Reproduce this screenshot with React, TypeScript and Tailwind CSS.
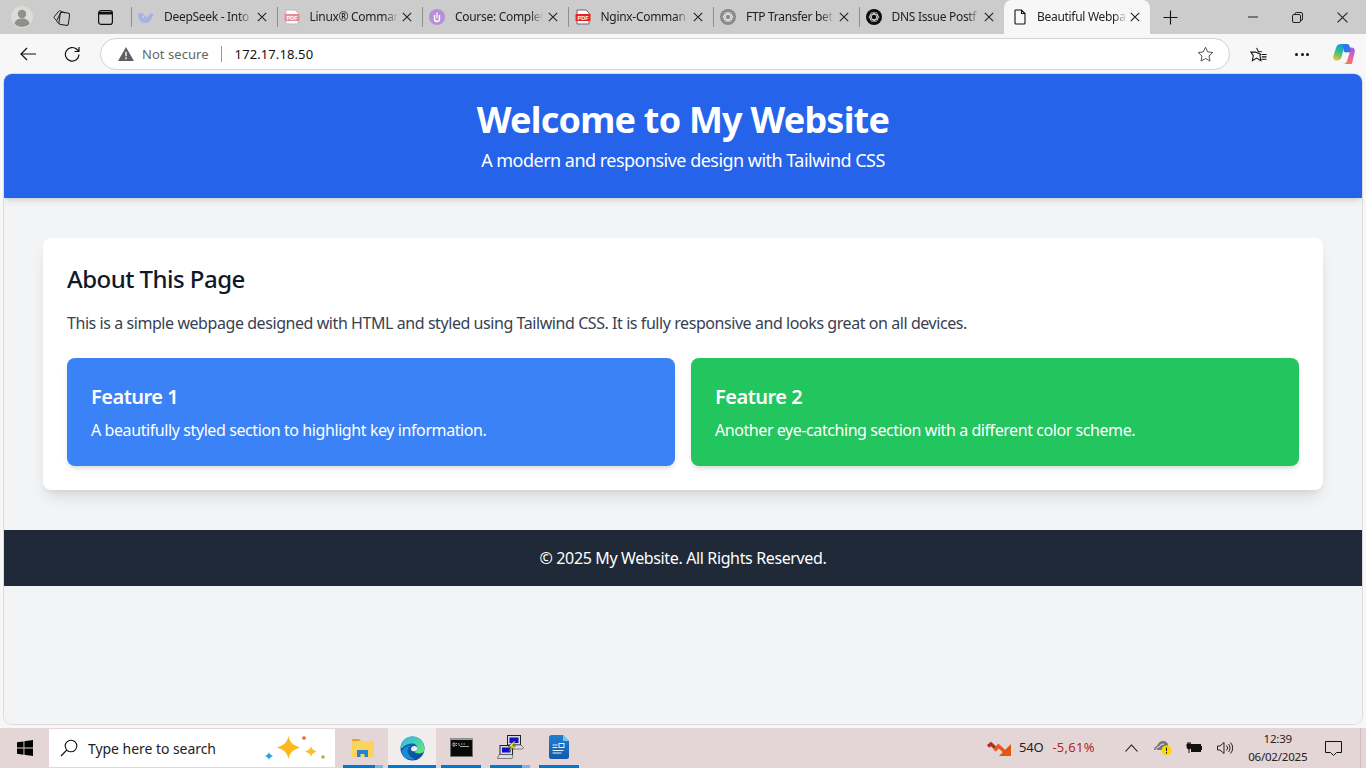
import { ReactNode } from "react";

const ui = "font-['Noto_Sans',sans-serif]";

function Close() {
  return (
    <svg className="w-[10px] h-[10px] shrink-0" viewBox="0 0 10 10" fill="none" stroke="#222" strokeWidth="1.1">
      <path d="M.8.8l8.4 8.4M9.2.8L.8 9.2" />
    </svg>
  );
}

function PdfIcon({ faded }: { faded?: boolean }) {
  const c = faded ? "#e98b8b" : "#f01f25";
  return (
    <svg className="w-[16px] h-[16px] shrink-0" viewBox="0 0 16 16">
      <path d="M2 1h9l3 3v11H2z" fill="#fff" stroke={faded ? "#bbb" : "#666"} strokeWidth="1" />
      <rect x="0.5" y="5" width="15" height="7" fill={c} />
      <text x="8" y="10.800" textAnchor="middle" fontSize="5.500" fontWeight="700" fill="#fff" fontFamily="Liberation Sans">PDF</text>
    </svg>
  );
}

function DeepSeekIcon() {
  return (
    <svg className="w-[16px] h-[16px] shrink-0" viewBox="0 0 16 16" fill="#a4b2e6">
      <path d="M0 3c1 2 2 2 3 1 2 0 4 2 5 5 2-1 2-3 4-4l1-1 1 1c1 0 2 0 2 1-1 1-2 1-2 2-1 4-4 6-7 6-4 0-7-3-7-11z" />
      <circle cx="5" cy="8" r="1" fill="#d0d0d0" />
    </svg>
  );
}

function CourseIcon() {
  return (
    <svg className="w-[16px] h-[16px] shrink-0" viewBox="0 0 16 16">
      <circle cx="8" cy="8" r="8" fill="#b78ed8" />
      <path d="M5.500 6v4a2.500 2.500 0 0 0 5 0V6" fill="none" stroke="#fff" strokeWidth="1.400" />
      <path d="M8 3.500v6" stroke="#fff" strokeWidth="1.200" />
    </svg>
  );
}

function GptIcon({ dark }: { dark?: boolean }) {
  const bg = dark ? "#0d0d0d" : "#8a8a8a";
  return (
    <svg className="w-[16px] h-[16px] shrink-0" viewBox="0 0 16 16">
      <circle cx="8" cy="8" r="8" fill={bg} />
      <g fill="none" stroke="#fff" strokeWidth="0.800" opacity="0.9">
        <ellipse cx="8" cy="8" rx="4.800" ry="2.600" />
        <ellipse cx="8" cy="8" rx="4.800" ry="2.600" transform="rotate(60 8 8)" />
        <ellipse cx="8" cy="8" rx="4.800" ry="2.600" transform="rotate(120 8 8)" />
      </g>
    </svg>
  );
}

function PageIcon() {
  return (
    <svg className="w-[16px] h-[16px] shrink-0" viewBox="0 0 16 16" fill="none" stroke="#111" strokeWidth="1.100">
      <path d="M3.500 1h6l3.500 3.500V14a1 1 0 0 1-1 1H4a1 1 0 0 1-1-1V1.500a.5.500 0 0 1 .5-.5zM9.500 1v3.500H13" />
    </svg>
  );
}

function Tab({ icon, title }: { icon: ReactNode; title: string }) {
  return (
    <div className="relative w-[145.500px] h-[34px] shrink-0 flex items-center pl-[7px] pr-[10px]">
      <span className="absolute left-0 top-[7px] h-[20px] w-px bg-[#8e8e8e]" />
      {icon}
      <span className="ml-[10px] w-[88px] overflow-hidden whitespace-nowrap text-[12px] leading-[16px] text-[#222] tracking-[-0.3px] [mask-image:linear-gradient(to_right,#000_85%,transparent)]">
        {title}
      </span>
      <span className="ml-auto">
        <Close />
      </span>
    </div>
  );
}

function TabBar() {
  return (
    <div className="h-[34px] bg-[#cccccc] flex items-center">
      <div className="w-[44px] h-[34px] flex items-center justify-center">
        <svg className="w-[22px] h-[22px]" viewBox="0 0 22 22">
          <circle cx="11" cy="11" r="11" fill="#dedbd6" />
          <circle cx="11" cy="8" r="4.200" fill="#8f8f8f" />
          <path d="M3.500 18c.5-4 3.500-5.500 7.500-5.500s7 1.500 7.500 5.500a11 11 0 0 1-15 0z" fill="#8f8f8f" />
        </svg>
      </div>
      <div className="ml-[9px] w-[17px] flex justify-center">
        <svg className="w-[17px] h-[17px]" viewBox="0 0 17 17" fill="none" stroke="#1c1c1c" strokeWidth="1">
          <rect x="6.500" y="3.500" width="9.500" height="12.500" rx="2" transform="rotate(8 11 10)" />
          <path d="M6 14.500l-1.700-1.300a1.600 1.600 0 0 1-.4-2l3.700-7.500a1.600 1.600 0 0 1 2-.8l2.400 1" />
          <path d="M3.500 11.500L1.500 9.500a1.600 1.600 0 0 1 0-2.100L5.500 2.500a1.600 1.600 0 0 1 2.100-.4l1.300.8" />
        </svg>
      </div>
      <div className="ml-[27px] w-[16px] flex justify-center">
        <svg className="w-[15px] h-[15px]" viewBox="0 0 15 15" fill="none" stroke="#111" strokeWidth="1.200">
          <rect x=".6" y=".6" width="13.800" height="13.800" rx="2.500" />
          <path d="M1 3.200h13" strokeWidth="2.600" />
        </svg>
      </div>
      <div className="ml-[18px] flex">
        <Tab icon={<DeepSeekIcon />} title="DeepSeek - Into" />
        <Tab icon={<PdfIcon faded />} title="Linux® Comman" />
        <Tab icon={<CourseIcon />} title="Course: Complet" />
        <Tab icon={<PdfIcon />} title="Nginx-Comman" />
        <Tab icon={<GptIcon />} title="FTP Transfer bet" />
        <Tab icon={<GptIcon dark />} title="DNS Issue Postf" />
        <div className="relative w-[146px] h-[34px] shrink-0 flex items-center pl-[8px] pr-[10px] bg-[#f7f7f7] rounded-t-[8px]">
          <PageIcon />
          <span className="ml-[9px] w-[90px] overflow-hidden whitespace-nowrap text-[12px] leading-[16px] text-[#222] tracking-[-0.3px] [mask-image:linear-gradient(to_right,#000_85%,transparent)]">
            Beautiful Webpa
          </span>
          <span className="ml-auto">
            <Close />
          </span>
        </div>
      </div>
      <svg className="ml-[13px] w-[15px] h-[15px]" viewBox="0 0 15 15" stroke="#111" strokeWidth="1.100">
        <path d="M7.500.5v14M.5 7.500h14" />
      </svg>
      <div className="ml-auto flex items-center text-[#111]">
        <div className="w-[45px] flex justify-center">
          <svg className="w-[10px] h-[10px]" viewBox="0 0 10 10" stroke="#222" strokeWidth="1">
            <path d="M0 5h10" />
          </svg>
        </div>
        <div className="w-[45px] flex justify-center">
          <svg className="w-[11px] h-[11px]" viewBox="0 0 11 11" fill="none" stroke="#222" strokeWidth="1">
            <rect x=".5" y="2.500" width="8" height="8" rx="1.500" />
            <path d="M3 2.500v-.5a1.500 1.500 0 0 1 1.500-1.500h4.500a1.500 1.500 0 0 1 1.500 1.500v5a1.500 1.500 0 0 1-1.500 1.500" />
          </svg>
        </div>
        <div className="w-[46px] flex justify-center pr-[2px]">
          <svg className="w-[11px] h-[11px]" viewBox="0 0 10 10" fill="none" stroke="#222" strokeWidth="1">
            <path d="M.5.5l9 9M9.500.5l-9 9" />
          </svg>
        </div>
      </div>
    </div>
  );
}

function Toolbar() {
  return (
    <div className="h-[40px] bg-[#f7f7f7] flex items-center">
      <div className="w-[56px] flex justify-center">
        <svg className="w-[16px] h-[14px]" viewBox="0 0 16 14" fill="none" stroke="#111" strokeWidth="1.200">
          <path d="M16 7H1M7 1L1 7l6 6" />
        </svg>
      </div>
      <div className="w-[32px] flex justify-center">
        <svg className="w-[17px] h-[17px]" viewBox="0 0 17 17" fill="none" stroke="#111" strokeWidth="1.200">
          <path d="M15 8.500A6.800 6.800 0 1 1 12.800 3.300L15 5.500M15 1v4.500h-4.500" />
        </svg>
      </div>
      <div className="ml-[12px] w-[1130px] h-[32px] bg-white border border-[#d2d2d2] rounded-full flex items-center pl-[17px] pr-[15px]">
        <svg className="w-[16px] h-[14px]" viewBox="0 0 17 15">
          <path d="M8.500 0L17 15H0z" fill="#5f5f5f" />
          <path d="M8.500 5v5M8.500 11v2" stroke="#fff" strokeWidth="1.400" />
        </svg>
        <span className="ml-[8px] text-[13px] leading-[18px] text-[#666] tracking-[0.05px]">Not secure</span>
        <span className="ml-[12px] w-px h-[16px] bg-[#9a9a9a]" />
        <span className="ml-[13px] text-[13px] leading-[18px] text-[#111] tracking-[0.1px]">172.17.18.50</span>
        <svg className="ml-auto w-[17px] h-[17px]" viewBox="0 0 17 17" fill="none" stroke="#555" strokeWidth="1">
          <path d="M8.500 1.200l2.200 4.700 5.100.6-3.800 3.500 1 5.100-4.500-2.600-4.500 2.600 1-5.100L1.200 6.500l5.100-.6z" />
        </svg>
      </div>
      <svg className="ml-[20px] w-[17px] h-[17px]" viewBox="0 0 18 17" fill="none" stroke="#111" strokeWidth="1.100">
        <path d="M7 1.500l1.900 4h3.600M11.500 8.500l-1 1 1 5.500-4.500-2.800-4.500 2.800 1-5.300L1 6h4.800z" />
        <path d="M12.500 8.500h5M12.500 11h5M12 13.500h5.500" />
      </svg>
      <div className="ml-[28px] flex gap-[2.500px]">
        <span className="w-[3px] h-[3px] rounded-full bg-[#111]" />
        <span className="w-[3px] h-[3px] rounded-full bg-[#111]" />
        <span className="w-[3px] h-[3px] rounded-full bg-[#111]" />
      </div>
      <svg className="ml-[24px] w-[22px] h-[22px]" viewBox="0 0 22 22">
        <defs>
          <linearGradient id="cpA" x1="0.6" y1="0" x2="0.3" y2="1">
            <stop offset="0" stopColor="#1f8fe8" />
            <stop offset="0.5" stopColor="#2fc28a" />
            <stop offset="1" stopColor="#f2c230" />
          </linearGradient>
          <linearGradient id="cpB" x1="0.8" y1="0" x2="0.3" y2="1">
            <stop offset="0" stopColor="#9a5cf0" />
            <stop offset="0.55" stopColor="#ee5fa8" />
            <stop offset="1" stopColor="#f5853b" />
          </linearGradient>
        </defs>
        <path d="M8 1h5.500c-1.500 1-2.300 2.500-2.800 4.500L8.500 14c-.5 2-2 3.500-4 3.500h-1C1 17.500-.3 15.500.3 13L3 5c.7-2.500 2.500-4 5-4z" fill="url(#cpA)" />
        <path d="M10 21h8.500c-.2 0 .4 0 .5-.5L21.700 9c.6-2.500-.7-4.500-3.200-4.500h-2c.8 2 .6 3.500 0 5.500l-2 6.500C14 19 12.500 21 10 21z" fill="url(#cpB)" />
        <path d="M10 1h4c1.800 0 2.800 1.500 3 4l.7 4-5 .5-2-1z" fill="#2c78ea" />
      </svg>
    </div>
  );
}

function Page() {
  return (
    <div className={`h-full bg-[#f3f4f6] text-[#111827] ${ui}`}>
      <header className="bg-[#2563eb] text-white text-center p-6 shadow-md">
        <h1 className="text-4xl h-[40px] leading-[44px] font-bold tracking-[-0.022em]">Welcome to My Website</h1>
        <p className="text-lg mt-2 tracking-[-0.029em]">A modern and responsive design with Tailwind CSS</p>
      </header>
      <main className="container mx-auto mt-10 p-6 bg-white rounded-lg shadow-lg">
        <h2 className="text-2xl h-[32px] leading-[34px] font-medium tracking-[-0.022em]">About This Page</h2>
        <p className="mt-4 h-[24px] leading-[26px] text-[#374151] tracking-[-0.027em]">
          This is a simple webpage designed with HTML and styled using Tailwind CSS. It is fully responsive and looks
          great on all devices.
        </p>
        <div className="grid grid-cols-2 gap-4 mt-6">
          <div className="p-6 bg-[#3b82f6] text-white rounded-lg shadow-md">
            <h3 className="text-xl h-[28px] leading-[30px] font-semibold tracking-[-0.025em]">Feature 1</h3>
            <p className="mt-2 tracking-[-0.0255em]">A beautifully styled section to highlight key information.</p>
          </div>
          <div className="p-6 bg-[#22c55e] text-white rounded-lg shadow-md">
            <h3 className="text-xl h-[28px] leading-[30px] font-semibold tracking-[-0.025em]">Feature 2</h3>
            <p className="mt-2 tracking-[-0.027em]">Another eye-catching section with a different color scheme.</p>
          </div>
        </div>
      </main>
      <footer className="mt-10 p-4 bg-[#1f2937] text-white text-center tracking-[-0.023em]">
        © 2025 My Website. All Rights Reserved.
      </footer>
    </div>
  );
}

function AppSlot({ w, active, split, ml, children }: { w: number; active?: boolean; split?: boolean; ml: number; children: ReactNode }) {
  return (
    <div
      className={`relative h-[40px] flex items-center justify-center ${active ? "bg-[#f2eded]" : ""}`}
      style={{ width: w, marginLeft: ml }}
    >
      {children}
      <span className="absolute left-0 right-0 bottom-0 h-[3px] bg-[#0078d4]" />
      {split && <span className="absolute right-0 bottom-0 w-[8px] h-[3px] bg-[#7fb4dc]" />}
    </div>
  );
}

function Taskbar() {
  return (
    <div className={`relative h-[40px] bg-[#e4d6d6] flex items-center ${ui}`}>
      <div className="w-[49px] flex justify-center">
        <svg className="w-[16px] h-[16px]" viewBox="0 0 16 16" fill="#000">
          <path d="M0 2.300l6.500-.9v6.200H0zM7.400 1.300L16 0v7.600H7.400zM0 8.500h6.500v6.200L0 13.800zM7.400 8.500H16V16l-8.600-1.200z" />
        </svg>
      </div>
      <div className="w-[286px] h-[38px] bg-white flex items-center">
        <svg className="ml-[11px] w-[18px] h-[18px]" viewBox="0 0 18 18" fill="none" stroke="#111" strokeWidth="1.100">
          <circle cx="11" cy="7" r="5.800" />
          <path d="M6.800 11L1 17" />
        </svg>
        <span className="ml-[10px] pt-[1px] text-[14px] leading-[20px] text-[#222] tracking-[-0.05px]">Type here to search</span>
        <svg className="ml-auto mr-[8px] w-[64px] h-[28px]" viewBox="0 0 64 28">
          <path d="M25.500 2c1.500 6.500 4 9 11.500 11.500-7.500 2.500-10 5-11.500 11.500C24 18.500 21.500 16 14 13.500 21.500 11 24 8.500 25.500 2z" fill="#fbb91d" />
          <path d="M48 12c.7 2.700 1.600 3.800 6 5.500-4.400 1.700-5.300 2.800-6 5.500-.7-2.700-1.600-3.800-6-5.500 4.400-1.700 5.300-2.800 6-5.500z" fill="#fbc02d" />
          <path d="M6 18c.4 1.700 1 2.500 4 4-3 1.500-3.600 2.300-4 4-.4-1.700-1-2.500-4-4 3-1.500 3.600-2.300 4-4z" fill="#2c9fe8" />
          <circle cx="41" cy="4" r="1.800" fill="#ea5a2a" />
          <circle cx="60" cy="23" r="1.800" fill="#8cc63f" />
        </svg>
      </div>
      <AppSlot w={40} ml={8} split>
        <svg className="w-[22px] h-[19px] mb-[2px]" viewBox="0 0 22 19">
          <path d="M0 2a1 1 0 0 1 1-1h6l2 2 1 2H0z" fill="#e0a526" />
          <rect x="0" y="3" width="22" height="16" rx="1" fill="#fbd35e" />
          <path d="M5 19v-7h11v7h-3.500v-3h-4v3z" fill="#1f86d6" />
        </svg>
      </AppSlot>
      <AppSlot w={48} ml={5} active>
        <svg className="w-[25px] h-[25px]" viewBox="0 0 25 25">
          <defs>
            <linearGradient id="egA" x1="0" y1="0" x2="1" y2="1">
              <stop offset="0" stopColor="#2fb5ee" />
              <stop offset="1" stopColor="#66eb6e" />
            </linearGradient>
            <linearGradient id="egB" x1="0" y1="0" x2="0" y2="1">
              <stop offset="0" stopColor="#0c6bb8" />
              <stop offset="1" stopColor="#0a4f96" />
            </linearGradient>
          </defs>
          <circle cx="12.500" cy="12.500" r="12" fill="url(#egB)" />
          <path d="M.5 12C1.500 5 6.500.5 12.500.5 19.500.5 24.500 6 24.500 13c0 3-2.500 4.500-5.500 4.500-2 0-4-.7-4.500-1.700 2-.5 3-1.700 3-3.300 0-3-2.500-5-5.500-5-4 0-7.500 1.500-9.500 4.500z" fill="url(#egA)" />
          <path d="M11 10c-3 1-4 4-3 7 .8 2.500 3.500 5 7 6-6 2-12-1-13.500-7C3 12 7 9.500 11 10z" fill="#1b8ad8" />
          <path d="M11 13c0-2 2-3.500 4-3 1.500.3 2.500 1.500 2.500 2.700 0 1.300-1.500 2.300-3 2.600-1.800.2-3.500-.6-3.500-2.300z" fill="#f2eded" />
        </svg>
      </AppSlot>
      <AppSlot w={40} ml={5}>
        <svg className="w-[23px] h-[19px] mb-[1px]" viewBox="0 0 23 19">
          <rect width="23" height="19" rx="1" fill="#0a0a0a" />
          <rect width="23" height="2" fill="#9c9c9c" />
          <rect x=".5" y=".5" width="22" height="18" fill="none" stroke="#8a8a8a" strokeWidth=".8" />
          <path d="M3 5h2v3H3zM6 5.500h1M6 7.500h1M8.500 5l1 3" stroke="#ccc" strokeWidth=".8" fill="none" />
          <path d="M11 6h1.500M13.500 6H15M10 8.500h9" stroke="#ccc" strokeWidth=".8" />
        </svg>
      </AppSlot>
      <AppSlot w={40} ml={9} split>
        <svg className="w-[27px] h-[24px] mb-[2px]" viewBox="0 0 27 24">
          <rect x="10.500" y=".5" width="13" height="9.500" fill="#d8d8e0" stroke="#222" strokeWidth="1" />
          <rect x="12.500" y="2.500" width="9" height="5.500" fill="#1010c8" />
          <path d="M14 10h10l2.500 2.500-1 1.500H14z" fill="#ddd" stroke="#555" strokeWidth=".7" />
          <rect x="3" y="10.500" width="12.500" height="9" fill="#d8d8e0" stroke="#222" strokeWidth="1" />
          <rect x="5" y="12.500" width="8.500" height="5" fill="#1010c8" />
          <path d="M2 19.500h13l1 2-1 2H.5z" fill="#ddd" stroke="#555" strokeWidth=".7" />
          <path d="M17 6l-5.500 5.500 3 .4-3.500 5.100 7.500-6-3-.3 3-4.700z" fill="#f8e71c" stroke="#2a2a2a" strokeWidth=".5" />
        </svg>
      </AppSlot>
      <AppSlot w={40} ml={9}>
        <svg className="w-[20px] h-[24px] mb-[2px]" viewBox="0 0 20 24">
          <defs>
            <linearGradient id="wrA" x1="0" y1="0" x2="0" y2="1">
              <stop offset="0" stopColor="#1f7fd2" />
              <stop offset="1" stopColor="#1559a8" />
            </linearGradient>
          </defs>
          <path d="M2.500 0H14l6 6v15.500a2.500 2.500 0 0 1-2.500 2.500h-15A2.500 2.500 0 0 1 0 21.500v-19A2.500 2.500 0 0 1 2.500 0z" fill="url(#wrA)" />
          <path d="M14 0l6 6h-6z" fill="#79c3f2" />
          <path d="M3.500 9.500h5v1h-5zM3.500 12h5v1h-5zM3.500 15h11v1h-11zM3.500 17.500h9v1h-9z" fill="#e8f2fb" />
          <rect x="10" y="8.500" width="5" height="4" fill="none" stroke="#e8f2fb" strokeWidth="1" />
        </svg>
      </AppSlot>
      <svg className="ml-[408px] w-[24px] h-[15px]" viewBox="0 0 24 15" fill="none">
        <path d="M1 5.500l3-2.500 5.500 5" stroke="#a8321e" strokeWidth="3.500" />
        <path d="M7.500 9.500l4-4.500 6.500 6" stroke="#ea5a1c" strokeWidth="3.500" />
        <path d="M24 3v12H12z" fill="#e5560f" />
      </svg>
      <span className="ml-[8px] text-[13px] text-[#222] tracking-[-0.2px]">54O</span>
      <span className="ml-[9px] text-[13px] text-[#b3261e] tracking-[0.25px]">-5,61%</span>
      <svg className="ml-[30px] w-[13px] h-[8px]" viewBox="0 0 13 8" fill="none" stroke="#111" strokeWidth="1.100">
        <path d="M.5 7.500l6-6.500 6 6.500" />
      </svg>
      <svg className="ml-[15px] w-[19px] h-[16px]" viewBox="0 0 19 16">
        <path d="M1 10c0-3 2-4 3-4 1-3 3-5 6-5 3 0 5 2 5 4v5H2z" fill="#777" />
        <path d="M3 10c0-2 2-3 3-3 1-2 3-3 5-3" fill="none" stroke="#eee" strokeWidth="1" />
        <circle cx="13.500" cy="10.500" r="5" fill="#f8d800" />
        <path d="M13.500 7.500v3.500M13.500 12v1.500" stroke="#111" strokeWidth="1" />
      </svg>
      <svg className="ml-[14px] w-[16px] h-[12px]" viewBox="0 0 16 12">
        <path d="M2 0v2M4 0v2M1 2h4v3a2 2 0 0 1-4 0zM3 7v4" stroke="#111" strokeWidth="1" fill="#111" />
        <rect x="5" y="2" width="10" height="8" fill="#111" />
        <rect x="15" y="4" width="1" height="4" fill="#111" />
      </svg>
      <svg className="ml-[15px] w-[16px] h-[14px]" viewBox="0 0 16 14" fill="none" stroke="#222" strokeWidth="1">
        <path d="M.5 5h2.500L7 1.500v11L3 9H.5z" />
        <path d="M9.500 4.500a3.500 3.500 0 0 1 0 5M11.500 3a6 6 0 0 1 0 8M13.500 1.500a8 8 0 0 1 0 11" />
      </svg>
      <div className="ml-[12px] w-[66px] text-center text-[11.500px] leading-[18px] text-[#222] tracking-[-0.2px]">
        <div>12:39</div>
        <div>06/02/2025</div>
      </div>
      <svg className="ml-[14px] w-[17px] h-[15px]" viewBox="0 0 17 15" fill="none" stroke="#111" strokeWidth="1">
        <path d="M.5.5h16v11h-5l-3 3-3-3h-5z" />
      </svg>
      <span className="absolute right-[5px] top-0 bottom-0 w-px bg-[#cdbfbf]" />
    </div>
  );
}

export default function App() {
  return (
    <div className={`h-screen w-full overflow-hidden flex flex-col ${ui}`}>
      <TabBar />
      <Toolbar />
      <div className="h-[654px] bg-[#f7f7f7] px-[4px] pb-[4px]">
        <div className="h-full rounded-[8px] overflow-hidden shadow-[0_0_0_1px_#dcdcdc]">
          <Page />
        </div>
      </div>
      <Taskbar />
    </div>
  );
}
